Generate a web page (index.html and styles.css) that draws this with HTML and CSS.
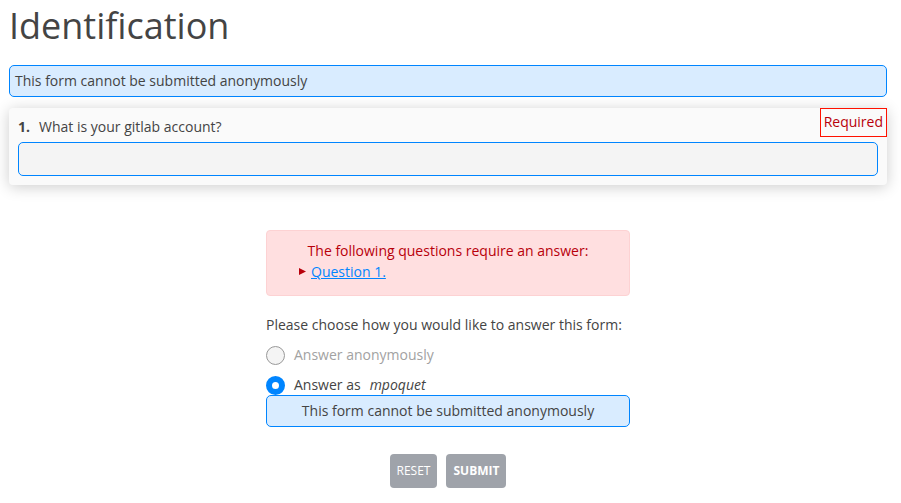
FILE: index.html
```html
<!DOCTYPE html>
<html lang="en">
<head>
<meta charset="utf-8">
<meta name="viewport" content="width=device-width, initial-scale=1">
<title>Identification</title>
<link rel="stylesheet" href="styles.css">
</head>
<body>
<main class="page">
  <h1 class="title">Identification</h1>
  <p class="notice">This form cannot be submitted anonymously</p>
  <form>
    <section class="question" id="question-1">
      <div class="question-head">
        <label class="question-label" for="answer-1"><strong class="number">1.</strong>What is your gitlab account?</label>
        <span class="required">Required</span>
      </div>
      <input class="answer" type="text" id="answer-1" name="answer-1">
    </section>
    <div class="validation">
      <div class="errors">
        <p class="errors-title">The following questions require an answer:</p>
        <ul class="errors-list">
          <li><svg class="marker" viewBox="0 0 7 7" aria-hidden="true"><path d="M0 0 7 3.5 0 7Z"/></svg><a href="#question-1">Question 1.</a></li>
        </ul>
      </div>
      <fieldset class="identity">
        <legend>Please choose how you would like to answer this form:</legend>
        <label class="choice disabled"><input type="radio" name="identity" disabled>Answer anonymously</label>
        <label class="choice"><input type="radio" name="identity" checked><span>Answer as</span><em>mpoquet</em></label>
      </fieldset>
      <p class="notice centered">This form cannot be submitted anonymously</p>
      <div class="actions">
        <button class="button" type="reset">Reset</button>
        <button class="button primary" type="submit">Submit</button>
      </div>
    </div>
  </form>
</main>
</body>
</html>
```

FILE: styles.css
```css
* {
  box-sizing: border-box;
}

body {
  margin: 0;
  background: #fff;
  color: #444;
  font: 14px/20px "Open Sans", sans-serif;
}

h1, p, ul, fieldset {
  margin: 0;
  padding: 0;
}

.page {
  padding: 0 14px 0 9px;
}

.title {
  padding-bottom: 13px;
  font-size: 36px;
  font-weight: 400;
  line-height: 52px;
}

.notice {
  padding: 5px;
  border: 1px solid #0085ff;
  border-radius: 5px;
  background: #d9ecff;
}

.centered {
  text-align: center;
}

.question {
  margin-top: 11px;
  padding: 0 9px 9px;
  border-radius: 4px;
  background: #fafafa;
  box-shadow: 0 2px 15px rgba(0, 0, 0, 0.2);
}

.question-head {
  display: flex;
  justify-content: space-between;
  align-items: flex-start;
  height: 34px;
  margin-right: -9px;
}

.question-label {
  padding-top: 9px;
}

.number {
  margin-right: 9px;
}

.required {
  padding: 3px 3px 5px;
  border: 1px solid #f10;
  color: #b8000b;
  line-height: 19px;
}

.answer {
  display: block;
  width: 100%;
  height: 34px;
  padding: 0 8px;
  border: 1px solid #0085ff;
  border-radius: 5px;
  background: #f4f4f4;
  color: inherit;
  font: inherit;
}

.validation {
  max-width: 364px;
  margin: 45px auto 0;
}

.errors {
  padding: 9px 32px 13px;
  border: 1px solid #fdd2d3;
  border-radius: 4px;
  background: #ffdfe0;
  color: #b8000b;
  line-height: 21px;
}

.errors-title {
  text-align: center;
}

.errors-list {
  list-style: none;
}

.errors-list li {
  display: flex;
  align-items: center;
  gap: 5px;
}

.marker {
  width: 7px;
  height: 7px;
  fill: currentColor;
}

.errors a {
  color: #0085ff;
}

.identity {
  margin-top: 19px;
  border: 0;
}

legend {
  padding: 0;
}

.choice {
  display: flex;
  align-items: center;
  gap: 9px;
  margin-top: 10px;
}

.disabled {
  color: #a2a2a2;
}

.choice input {
  appearance: none;
  width: 19px;
  height: 19px;
  margin: 0;
  border: 1px solid #999;
  border-radius: 50%;
  background: #f4f4f4;
}

.choice input:checked {
  border: 6px solid #0085ff;
  background: #fff;
}

.actions {
  display: flex;
  justify-content: center;
  gap: 9px;
  margin-top: 27px;
}

.button {
  height: 34px;
  padding: 0 7px;
  border: 0;
  border-radius: 4px;
  background: #9fa3aa;
  color: #fff;
  font: 12px/20px "Open Sans", sans-serif;
  text-transform: uppercase;
}

.primary {
  font-weight: 700;
}
```
